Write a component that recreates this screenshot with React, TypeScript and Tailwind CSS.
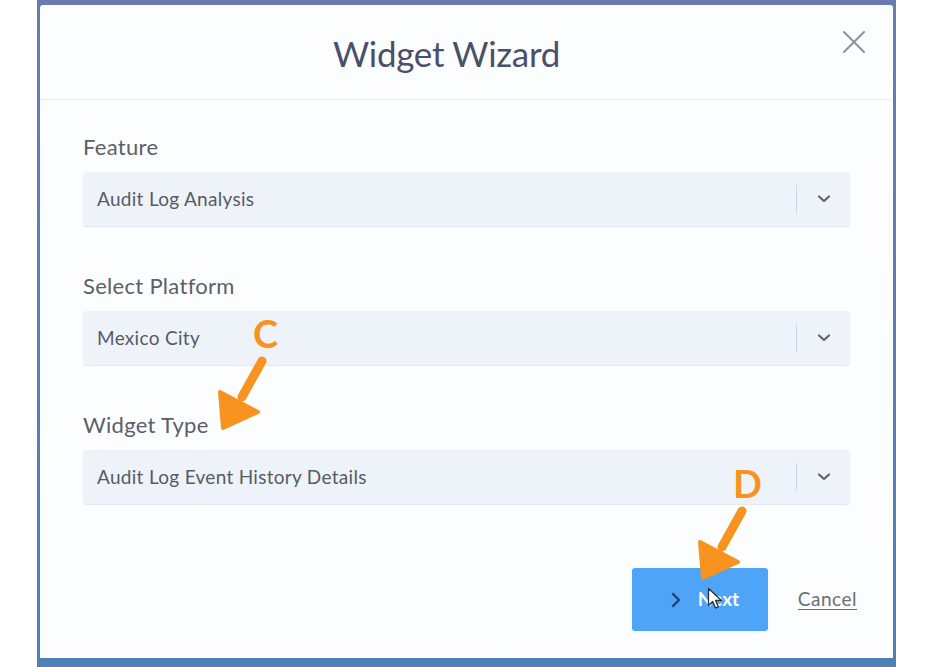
import React from 'react';

const fields = [
  { label: 'Feature', value: 'Audit Log Analysis' },
  { label: 'Select Platform', value: 'Mexico City' },
  { label: 'Widget Type', value: 'Audit Log Event History Details' },
];

function Chevron() {
  return (
    <svg width="14" height="10" viewBox="0 0 14 10" fill="none">
      <path d="M2 2.5l5 4.5 5-4.5" stroke="#5f636b" strokeWidth="2.2" strokeLinecap="round" strokeLinejoin="round" />
    </svg>
  );
}

function Arrow({ left, top }: { left: number; top: number }) {
  return (
    <svg
      className="absolute"
      style={{ left, top }}
      width="56"
      height="80"
      viewBox="0 0 56 80"
      fill="none"
    >
      <path d="M47 6L27 42" stroke="#f7931e" strokeWidth="9" strokeLinecap="round" />
      <polygon points="5,37 43,57 8,73" fill="#f7931e" stroke="#f7931e" strokeWidth="4" strokeLinejoin="round" />
    </svg>
  );
}

function SelectField({ label, value }: { label: string; value: string }) {
  return (
    <div className="flex flex-col">
      <label className="text-[22px] leading-[24px] tracking-[0.3px] text-[#5b5f67] mb-[13px]">{label}</label>
      <div className="h-[54px] flex items-center bg-[#eef3fa] rounded-[3px] shadow-[0_1px_1px_rgba(150,165,190,0.25)]">
        <span className="flex-1 pl-[14px] text-[19px] tracking-[0.3px] text-[#565b64]">{value}</span>
        <div className="w-px h-[28px] bg-[#cfd6e0]" />
        <div className="w-[53px] flex justify-center">
          <Chevron />
        </div>
      </div>
    </div>
  );
}

export default function App() {
  return (
    <div className="relative w-[936px] h-[667px] bg-white overflow-hidden" style={{ fontFamily: 'Lato, "Open Sans", sans-serif' }}>
      <div className="ml-[37px] w-[859px] h-full bg-gradient-to-b from-[#6a7bb0] to-[#4e7fb6] pt-[5px] pb-[9px] pl-[3px] pr-[3px]">
        <div className="h-full bg-[#fcfdfe] rounded-t-[3px] flex flex-col">
          <div className="relative h-[95px] border-b border-[#eceff3] flex items-center justify-center pr-[40px] pt-[2px]">
            <h1 className="text-[35px] text-[#4b5068] tracking-[-0.3px]">Widget Wizard</h1>
            <button className="absolute right-[26px] top-[24px] w-[26px] h-[26px] flex items-center justify-center">
              <svg width="24" height="24" viewBox="0 0 24 24" fill="none">
                <path d="M2 2l20 20M22 2L2 22" stroke="#8c919a" strokeWidth="2" strokeLinecap="round" />
              </svg>
            </button>
          </div>
          <div className="px-[43px] pt-[35px] flex flex-col gap-[48px]">
            {fields.map((f) => (
              <SelectField key={f.label} label={f.label} value={f.value} />
            ))}
          </div>
          <div className="flex justify-end items-center gap-[30px] pr-[36px] mt-[64px]">
            <button className="w-[136px] h-[63px] bg-[#4ea4f6] rounded-[3px] flex items-center justify-start gap-[17px] pl-[39px]">
              <svg width="10" height="16" viewBox="0 0 10 16" fill="none">
                <path d="M2 2l6 6-6 6" stroke="#23416e" strokeWidth="2.4" strokeLinecap="round" strokeLinejoin="round" />
              </svg>
              <span className="text-[19px] text-white font-bold">Next</span>
            </button>
            <a className="text-[19px] tracking-[0.5px] text-[#6b6e73] underline underline-offset-[3px]">Cancel</a>
          </div>
        </div>
      </div>

      <span className="absolute left-[253px] top-[314px] text-[38px] leading-none font-bold text-[#f7931e]">C</span>
      <Arrow left={215} top={355} />
      <span className="absolute left-[733px] top-[464px] text-[38px] leading-none font-bold text-[#f7931e]">D</span>
      <Arrow left={695} top={505} />

      <svg className="absolute" style={{ left: 707, top: 587 }} width="16" height="24" viewBox="0 0 16 24" fill="none">
        <path d="M1.5 1.5v17l4.2-4 2.8 6.5 2.8-1.2-2.7-6.3h5.9z" fill="#ffffff" stroke="#2a2f38" strokeWidth="1.3" strokeLinejoin="round" />
      </svg>
    </div>
  );
}
